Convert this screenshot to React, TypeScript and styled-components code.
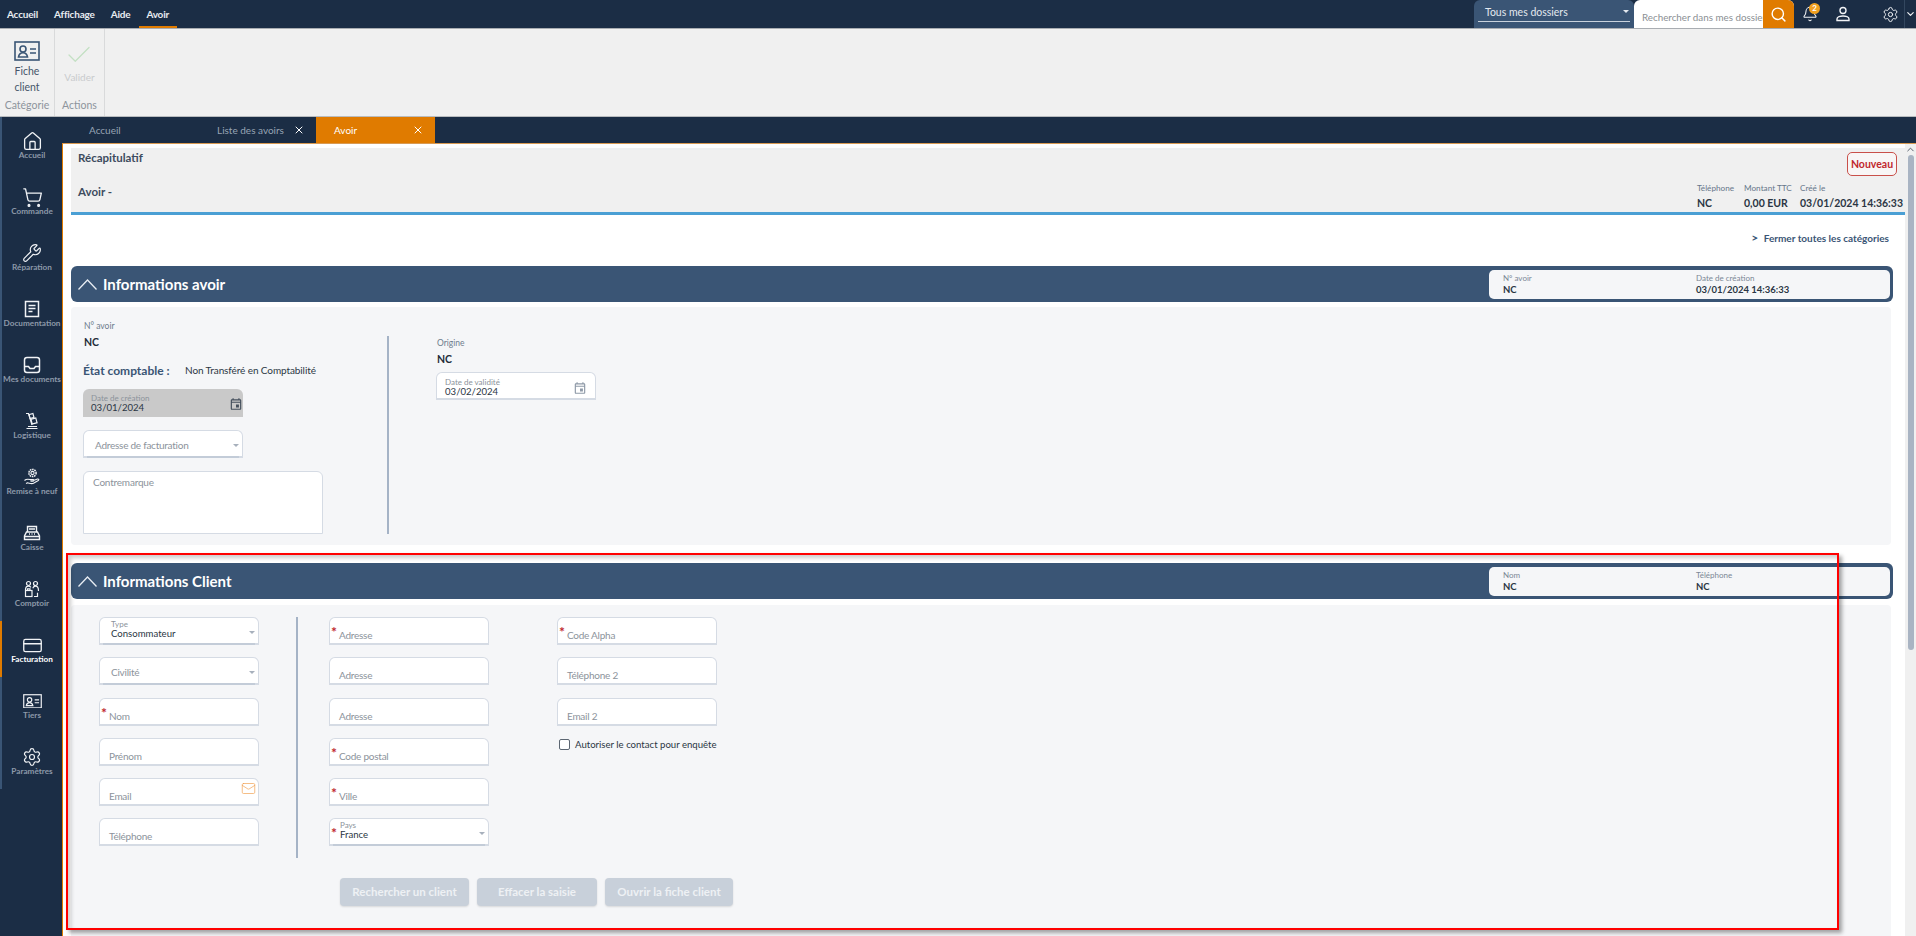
import React from "react";
import styled, { createGlobalStyle } from "styled-components";
import {
  Bell,
  Check,
  ChevronDown,
  ChevronUp,
  CreditCard,
  House,
  Mail,
  Search,
  Settings,
  ShoppingCart,
  Wrench,
  X,
} from "lucide-react";
import { MdOutlineEvent } from "react-icons/md";

const navy = "#1b2d45";
const slate = "#3a5575";
const orange = "#e07b00";

const GlobalStyle = createGlobalStyle`
  html, body {
    margin: 0;
    padding: 0;
    background: #fff;
  }
  * {
    box-sizing: border-box;
  }
  body {
    font-family: Lato, "Open Sans", sans-serif;
  }
`;

function IdCardIcon({ size = 22 }: { size?: number }) {
  return (
    <svg width={size} height={(size * 20) / 26} viewBox="0 0 26 20" fill="none" stroke="currentColor" strokeWidth="1.6">
      <rect x="1" y="1" width="24" height="18" />
      <circle cx="9" cy="8" r="3" />
      <path d="M4.5 16c.5-3 2.2-4.2 4.5-4.2s4 1.2 4.5 4.2z" />
      <path d="M16 8h6M16 12h6" />
    </svg>
  );
}

function PersonIcon() {
  return (
    <svg width="16" height="16" viewBox="0 0 16 16" fill="none" stroke="currentColor" strokeWidth="1.4">
      <circle cx="8" cy="4.500" r="3" />
      <path d="M2 14.500v-1.500c0-2 3.500-3 6-3s6 1 6 3v1.500z" />
    </svg>
  );
}

function DocIcon() {
  return (
    <svg width="18" height="18" viewBox="0 0 18 18" fill="none" stroke="currentColor" strokeWidth="1.5">
      <rect x="2.5" y="1.5" width="13" height="15" />
      <path d="M5.5 5.5h7M5.5 8.5h7M5.5 11.5h4" />
    </svg>
  );
}

function TrayIcon() {
  return (
    <svg width="18" height="18" viewBox="0 0 18 18" fill="none" stroke="currentColor" strokeWidth="1.5">
      <rect x="1.500" y="1.500" width="15" height="15" rx="2.500" />
      <path d="M1.500 10.500h4l1.500 2h4l1.500-2h4" />
    </svg>
  );
}

function TruckIcon() {
  return (
    <svg width="18" height="18" viewBox="0 0 18 18" fill="none" stroke="currentColor" strokeWidth="1.2">
      <path d="M3 1.5h2.500l3.500 11.500" />
      <rect x="6.5" y="2" width="4" height="4" transform="rotate(-15 8.5 4)" />
      <rect x="8.5" y="6.5" width="5" height="5" transform="rotate(-15 11 9)" />
      <path d="M3.5 16.500h11M5 14.500h9" />
    </svg>
  );
}

function RefurbishIcon() {
  return (
    <svg width="18" height="18" viewBox="0 0 18 18" fill="none" stroke="currentColor" strokeWidth="1.1">
      <circle cx="9.5" cy="5" r="1.600" />
      <circle cx="9.5" cy="5" r="3.600" strokeDasharray="1.6 .7" strokeWidth="1.5" />
      <path d="M1.500 12.500c2-1.800 3.600-1.600 5.600-.9h3c1 0 1 1.400 0 1.500H7.500M10.500 12.600l4-1.600c1.200-.3 1.800.8.800 1.500l-4.800 2.800c-2 .8-3.500 0-6-.5L3 15.500" />
    </svg>
  );
}

function RegisterIcon() {
  return (
    <svg width="18" height="18" viewBox="0 0 18 18" fill="none" stroke="currentColor" strokeWidth="1.4">
      <path d="M4.500 8V2.500h9V8" />
      <path d="M3.500 8h11l2 4v3.500h-15V12z" />
      <path d="M1.500 12.500h15M6 5h6M6 10h1M8.500 10h1M11 10h1" />
    </svg>
  );
}

function CounterIcon() {
  return (
    <svg width="18" height="18" viewBox="0 0 18 18" fill="none" stroke="currentColor" strokeWidth="1.2">
      <circle cx="5.500" cy="3.500" r="2" />
      <circle cx="12.500" cy="3.500" r="2" />
      <path d="M2.500 10c0-2.500 1.300-3.800 3-3.800 1 0 1.800.4 2.400 1.200M15.500 11c0-3-1.300-4.800-3-4.800-1.200 0-2.200.8-2.700 2" />
      <rect x="2.500" y="10.500" width="6.500" height="6" />
      <path d="M11 16.500h3.500v-3.800M4.500 10.500V8.800h2.500v1.700" />
    </svg>
  );
}

const navItems = [
  { label: "Accueil", icon: <House size={21} strokeWidth={1.5} /> },
  { label: "Commande", icon: <ShoppingCart size={21} strokeWidth={1.5} /> },
  { label: "Réparation", icon: <Wrench size={20} strokeWidth={1.4} /> },
  { label: "Documentation", icon: <DocIcon /> },
  { label: "Mes documents", icon: <TrayIcon /> },
  { label: "Logistique", icon: <TruckIcon /> },
  { label: "Remise à neuf", icon: <RefurbishIcon /> },
  { label: "Caisse", icon: <RegisterIcon /> },
  { label: "Comptoir", icon: <CounterIcon /> },
  { label: "Facturation", icon: <CreditCard size={21} strokeWidth={1.5} />, active: true },
  { label: "Tiers", icon: <IdCardIcon size={19} /> },
  { label: "Paramètres", icon: <Settings size={20} strokeWidth={1.4} /> },
];

type FieldDef = {
  label: string;
  required?: boolean;
  select?: boolean;
  value?: string;
  mail?: boolean;
};

const clientCol1: FieldDef[] = [
  { label: "Type", select: true, value: "Consommateur" },
  { label: "Civilité", select: true },
  { label: "Nom", required: true },
  { label: "Prénom" },
  { label: "Email", mail: true },
  { label: "Téléphone" },
];

const clientCol2: FieldDef[] = [
  { label: "Adresse", required: true },
  { label: "Adresse" },
  { label: "Adresse" },
  { label: "Code postal", required: true },
  { label: "Ville", required: true },
  { label: "Pays", required: true, select: true, value: "France" },
];

const clientCol3: FieldDef[] = [
  { label: "Code Alpha", required: true },
  { label: "Téléphone 2" },
  { label: "Email 2" },
];

function FormField({ field }: { field: FieldDef }) {
  return (
    <FieldBox $select={field.select}>
      {field.required && <Star>*</Star>}
      {field.value ? (
        <FilledText $starred={field.required}>
          <TinyLabel>{field.label}</TinyLabel>
          <FieldValue>{field.value}</FieldValue>
        </FilledText>
      ) : (
        <Placeholder $select={field.select}>{field.label}</Placeholder>
      )}
      {field.select && <Caret />}
      {field.mail && (
        <MailSlot>
          <Mail size={15} strokeWidth={1.1} />
        </MailSlot>
      )}
    </FieldBox>
  );
}

function DateField({ label, value, disabled }: { label: string; value: string; disabled?: boolean }) {
  return (
    <DateBox $disabled={disabled}>
      <div>
        <TinyLabel>{label}</TinyLabel>
        <FieldValue>{value}</FieldValue>
      </div>
      <DateIcon $disabled={disabled}>
        <MdOutlineEvent size={14} />
      </DateIcon>
    </DateBox>
  );
}

function SectionHeader({ title, cols }: { title: string; cols: { label: string; value: string }[] }) {
  return (
    <HeaderBar>
      <svg width="19" height="11" viewBox="0 0 19 11" fill="none" stroke="#e8edf3" strokeWidth="1.3">
        <path d="M.5 10.500L9.500 1L18.500 10.500" />
      </svg>
      <HeaderTitle>{title}</HeaderTitle>
      <HeaderSummary>
        {cols.map((c) => (
          <HeaderCol key={c.label}>
            <HeaderLabel>{c.label}</HeaderLabel>
            <HeaderValue>{c.value}</HeaderValue>
          </HeaderCol>
        ))}
      </HeaderSummary>
    </HeaderBar>
  );
}

export default function App() {
  return (
    <Page>
      <GlobalStyle />
      <TopBar>
        <Menu>
          <MenuItem>Accueil</MenuItem>
          <MenuItem>Affichage</MenuItem>
          <MenuItem>Aide</MenuItem>
          <MenuItem $active>Avoir</MenuItem>
        </Menu>
        <TopRight>
          <FolderSelect>
            <FolderInner>
              Tous mes dossiers
              <TopCaret />
            </FolderInner>
          </FolderSelect>
          <SearchBox>
            <SearchText>Rechercher dans mes dossier</SearchText>
            <SearchButton>
              <Search size={17} strokeWidth={2} />
            </SearchButton>
          </SearchBox>
          <TopIcon $w={32}>
            <Bell size={16} strokeWidth={1.6} />
            <Badge>2</Badge>
          </TopIcon>
          <TopIcon $w={34}>
            <PersonIcon />
          </TopIcon>
          <TopIcon $w={44} $pad={16}>
            <Settings size={17} strokeWidth={1.4} />
          </TopIcon>
          <ExpandButton>
            <ChevronDown size={12} strokeWidth={2.5} />
          </ExpandButton>
        </TopRight>
      </TopBar>

      <Ribbon>
        <RibbonGroup $w={55}>
          <RibbonBody>
            <FicheIcon>
              <IdCardIcon size={26} />
            </FicheIcon>
            <RibbonText>
              Fiche
              <br />
              client
            </RibbonText>
          </RibbonBody>
          <RibbonCaption>Catégorie</RibbonCaption>
        </RibbonGroup>
        <RibbonGroup $w={50}>
          <RibbonBody>
            <ValidIcon>
              <Check size={30} strokeWidth={1} />
            </ValidIcon>
            <RibbonDisabled>Valider</RibbonDisabled>
          </RibbonBody>
          <RibbonCaption>Actions</RibbonCaption>
        </RibbonGroup>
      </Ribbon>

      <Workspace>
        <SideNav>
          {navItems.map((item) => (
            <NavItem key={item.label} $active={item.active}>
              <NavIcon>{item.icon}</NavIcon>
              <NavLabel>{item.label}</NavLabel>
            </NavItem>
          ))}
        </SideNav>

        <MainColumn>
          <TabBar>
            <Tab $w={128}>Accueil</Tab>
            <Tab $w={126}>
              Liste des avoirs
              <X size={12} strokeWidth={2} color="#fff" />
            </Tab>
            <Tab $w={119} $active>
              Avoir
              <X size={12} strokeWidth={2} color="#fff" />
            </Tab>
          </TabBar>

          <ContentFrame>
            <ScrollArea>
              <Summary>
                <SummaryTop>
                  <SummaryTitle>Récapitulatif</SummaryTitle>
                  <NewBadge>Nouveau</NewBadge>
                </SummaryTop>
                <SummaryBottom>
                  <SummaryTitle>Avoir -</SummaryTitle>
                  <SummaryFacts>
                    <SummaryFact $w={47}>
                      <FactLabel>Téléphone</FactLabel>
                      <FactValue>NC</FactValue>
                    </SummaryFact>
                    <SummaryFact $w={56}>
                      <FactLabel>Montant TTC</FactLabel>
                      <FactValue>0,00 EUR</FactValue>
                    </SummaryFact>
                    <SummaryFact $w={87}>
                      <FactLabel>Créé le</FactLabel>
                      <FactValue>03/01/2024 14:36:33</FactValue>
                    </SummaryFact>
                  </SummaryFacts>
                </SummaryBottom>
              </Summary>

              <CloseAll>
                <span>&gt;</span> Fermer toutes les catégories
              </CloseAll>

              <SectionHeader
                title="Informations avoir"
                cols={[
                  { label: "N° avoir", value: "NC" },
                  { label: "Date de création", value: "03/01/2024 14:36:33" },
                ]}
              />
              <AvoirPanel>
                <AvoirLeft>
                  <ReadOnly>
                    <ReadLabel>N° avoir</ReadLabel>
                    <ReadValue>NC</ReadValue>
                  </ReadOnly>
                  <StateRow>
                    <StateLabel>État comptable :</StateLabel>
                    <StateValue>Non Transféré en Comptabilité</StateValue>
                  </StateRow>
                  <DateField label="Date de création" value="03/01/2024" disabled />
                  <AddressSelect>
                    <FieldBox $select>
                      <Placeholder $select>Adresse de facturation</Placeholder>
                      <Caret />
                    </FieldBox>
                  </AddressSelect>
                  <NoteBox>Contremarque</NoteBox>
                </AvoirLeft>
                <AvoirDivider />
                <AvoirRight>
                  <ReadOnly>
                    <ReadLabel>Origine</ReadLabel>
                    <ReadValue>NC</ReadValue>
                  </ReadOnly>
                  <DateField label="Date de validité" value="03/02/2024" />
                </AvoirRight>
              </AvoirPanel>

              <ClientHeader>
                <SectionHeader
                  title="Informations Client"
                  cols={[
                    { label: "Nom", value: "NC" },
                    { label: "Téléphone", value: "NC" },
                  ]}
                />
              </ClientHeader>
              <ClientPanel>
                <ClientColumns>
                  <FieldColumn>
                    {clientCol1.map((f) => (
                      <FormField key={f.label} field={f} />
                    ))}
                  </FieldColumn>
                  <ClientDivider />
                  <FieldColumn>
                    {clientCol2.map((f, i) => (
                      <FormField key={f.label + i} field={f} />
                    ))}
                  </FieldColumn>
                  <ThirdColumn>
                    {clientCol3.map((f) => (
                      <FormField key={f.label} field={f} />
                    ))}
                    <ConsentRow>
                      <ConsentBox />
                      Autoriser le contact pour enquête
                    </ConsentRow>
                  </ThirdColumn>
                </ClientColumns>
                <ButtonRow>
                  <GhostButton $w={129}>Rechercher un client</GhostButton>
                  <GhostButton $w={120}>Effacer la saisie</GhostButton>
                  <GhostButton $w={128}>Ouvrir la fiche client</GhostButton>
                </ButtonRow>
              </ClientPanel>
            </ScrollArea>
            <ScrollBar>
              <ChevronUp size={11} strokeWidth={2} color="#4b5563" />
              <ScrollThumb />
            </ScrollBar>
          </ContentFrame>
        </MainColumn>
      </Workspace>

      <Highlight />
    </Page>
  );
}

const Page = styled.div`
  position: relative;
  width: 1916px;
  height: 936px;
  overflow: hidden;
  background: #fff;
  display: flex;
  flex-direction: column;
`;

const TopBar = styled.header`
  height: 29px;
  flex: none;
  background: ${navy};
  border-bottom: 1px solid #a9adb2;
  display: flex;
  justify-content: space-between;
`;
const Menu = styled.nav`
  display: flex;
  padding-left: 7px;
  gap: 16px;
`;
const MenuItem = styled.div<{ $active?: boolean }>`
  position: relative;
  height: 28px;
  line-height: 28px;
  font-size: 10px;
  letter-spacing: -0.2px;
  font-weight: 700;
  color: #e8ecf1;
  ${({ $active }) =>
    $active &&
    `
    &::after {
      content: "";
      position: absolute;
      left: -7px;
      right: -8px;
      bottom: 0;
      height: 2px;
      background: ${orange};
    }
  `}
`;
const TopRight = styled.div`
  display: flex;
  align-items: stretch;
`;
const FolderSelect = styled.div`
  width: 160px;
  background: ${slate};
  border-radius: 6px 6px 0 0;
  padding: 0 4px;
`;
const FolderInner = styled.div`
  position: relative;
  height: 22px;
  padding: 5px 7px 0;
  font-size: 10.500px;
  line-height: 14px;
  color: #e4e9ef;
  border-bottom: 1px solid #c9d2dc;
`;
const TopCaret = styled.span`
  position: absolute;
  right: 1px;
  top: 10px;
  border-left: 3px solid transparent;
  border-right: 3px solid transparent;
  border-top: 3px solid #e4e9ef;
`;
const SearchBox = styled.div`
  width: 160px;
  display: flex;
  background: #fff;
  border-radius: 6px 6px 0 0;
  overflow: hidden;
`;
const SearchText = styled.div`
  flex: 1;
  min-width: 0;
  padding: 10px 0 0 8px;
  font-size: 9.800px;
  line-height: 14px;
  color: #8b8f94;
  white-space: nowrap;
`;
const SearchButton = styled.div`
  width: 31px;
  flex: none;
  background: ${orange};
  color: #fff;
  display: flex;
  align-items: center;
  justify-content: center;
`;
const TopIcon = styled.div<{ $w: number; $pad?: number }>`
  position: relative;
  width: ${({ $w }) => $w}px;
  padding-left: ${({ $pad }) => $pad || 0}px;
  flex: none;
  display: flex;
  align-items: center;
  justify-content: center;
  color: #f1f3f6;
`;
const Badge = styled.span`
  position: absolute;
  left: 15px;
  top: 3px;
  width: 11px;
  height: 11px;
  border-radius: 50%;
  background: #f0a020;
  color: #fff;
  font-size: 8px;
  font-weight: 700;
  line-height: 11px;
  text-align: center;
`;
const ExpandButton = styled.div`
  width: 12px;
  flex: none;
  border-left: 1px solid #33475f;
  display: flex;
  align-items: center;
  justify-content: center;
  color: #f1f3f6;
`;

const Ribbon = styled.section`
  height: 88px;
  flex: none;
  background: #f0f0f0;
  border-bottom: 1px solid #b9bcbf;
  display: flex;
`;
const RibbonGroup = styled.div<{ $w: number }>`
  width: ${({ $w }) => $w}px;
  border-right: 1px solid #d9dadb;
  display: flex;
  flex-direction: column;
  align-items: center;
`;
const RibbonBody = styled.div`
  flex: 1;
  display: flex;
  flex-direction: column;
  align-items: center;
`;
const FicheIcon = styled.div`
  margin-top: 12px;
  height: 20px;
  color: ${slate};
`;
const RibbonText = styled.div`
  margin-top: 3px;
  font-size: 10.500px;
  line-height: 15.500px;
  text-align: center;
  color: #47566a;
`;
const ValidIcon = styled.div`
  margin-top: 11px;
  height: 27px;
  color: #c4e0c4;
`;
const RibbonDisabled = styled.div`
  margin-top: 3px;
  font-size: 10px;
  line-height: 14px;
  color: #c9cbcd;
`;
const RibbonCaption = styled.div`
  height: 18px;
  font-size: 10.500px;
  line-height: 14px;
  color: #8d949c;
`;

const Workspace = styled.div`
  flex: 1;
  min-height: 0;
  display: flex;
  background: ${navy};
`;
const SideNav = styled.nav`
  width: 62px;
  height: 672px;
  flex: none;
  border-left: 2px solid ${slate};
`;
const NavItem = styled.div<{ $active?: boolean }>`
  height: 56px;
  margin-left: -2px;
  padding-top: 15px;
  border-left: 2px solid ${({ $active }) => ($active ? orange : "transparent")};
  display: flex;
  flex-direction: column;
  align-items: center;
  color: ${({ $active }) => ($active ? "#fff" : "#8d99a9")};
  font-weight: 700;
`;
const NavIcon = styled.div`
  height: 18px;
  display: flex;
  align-items: center;
  justify-content: center;
  color: #f1f3f6;
`;
const NavLabel = styled.div`
  font-size: 8.200px;
  line-height: 10px;
  white-space: nowrap;
`;

const MainColumn = styled.div`
  flex: 1;
  min-width: 0;
  display: flex;
  flex-direction: column;
`;
const TabBar = styled.div`
  height: 26px;
  flex: none;
  display: flex;
`;
const Tab = styled.div<{ $w: number; $active?: boolean }>`
  width: ${({ $w }) => $w}px;
  padding: 0 11px 0 ${({ $active }) => ($active ? 18 : 27)}px;
  display: flex;
  align-items: center;
  justify-content: space-between;
  font-size: 10px;
  color: ${({ $active }) => ($active ? "#fff" : "#97a4b4")};
  background: ${({ $active }) => ($active ? orange : "transparent")};
`;
const ContentFrame = styled.div`
  flex: 1;
  min-height: 0;
  background: #fff;
  border-top: 1px solid #d99a52;
  border-left: 1px solid ${orange};
  display: flex;
`;
const ScrollArea = styled.div`
  flex: 1;
  min-width: 0;
  overflow: hidden;
  padding: 4px 0 0 8px;
`;
const ScrollBar = styled.div`
  width: 11px;
  flex: none;
  background: #f0f0f0;
  display: flex;
  flex-direction: column;
  align-items: center;
`;
const ScrollThumb = styled.div`
  width: 6px;
  height: 495px;
  border-radius: 3px;
  background: #a9b4c3;
`;

const Summary = styled.section`
  height: 67px;
  background: #f0f0f0;
  border-bottom: 3px solid #4a9fd4;
  padding: 3px 18px 0 7px;
`;
const SummaryTop = styled.div`
  margin-right: -10px;
  display: flex;
  justify-content: space-between;
  align-items: flex-start;
  height: 34px;
`;
const SummaryTitle = styled.div`
  font-size: 11.500px;
  line-height: 14px;
  font-weight: 700;
  color: #3d4b5e;
`;
const NewBadge = styled.div`
  width: 50px;
  height: 24px;
  margin-top: 1px;
  border: 1px solid #c9504a;
  border-radius: 5px;
  background: #f8f6f6;
  color: #c0272d;
  font-size: 10.500px;
  font-weight: 700;
  line-height: 22px;
  text-align: center;
`;
const SummaryBottom = styled.div`
  display: flex;
  justify-content: space-between;
  align-items: flex-start;
`;
const SummaryFacts = styled.div`
  display: flex;
  margin-top: -2px;
`;
const SummaryFact = styled.div<{ $w: number }>`
  width: ${({ $w }) => $w}px;
  display: flex;
  flex-direction: column;
  gap: 5px;
  white-space: nowrap;
`;
const FactLabel = styled.div`
  font-size: 8.200px;
  line-height: 10px;
  color: #66768a;
`;
const FactValue = styled.div`
  font-size: 10.500px;
  line-height: 11px;
  font-weight: 700;
  color: #2b3644;
`;
const CloseAll = styled.div`
  height: 51px;
  padding: 16px 16px 0 0;
  text-align: right;
  font-size: 10px;
  line-height: 14px;
  font-weight: 700;
  color: ${slate};
  span {
    margin-right: 3px;
    font-size: 12px;
  }
`;

const HeaderBar = styled.div`
  width: 1822px;
  height: 36px;
  padding: 0 3px 0 7px;
  background: ${slate};
  border-radius: 6px;
  display: flex;
  align-items: center;
`;
const HeaderTitle = styled.div`
  margin-left: 6px;
  font-size: 15px;
  font-weight: 700;
  color: #fff;
`;
const HeaderSummary = styled.div`
  margin-left: auto;
  width: 401px;
  height: 29px;
  padding-left: 14px;
  border-radius: 5px;
  background: #f5f6f8;
  display: flex;
`;
const HeaderCol = styled.div`
  width: 193px;
  padding-top: 3px;
`;
const HeaderLabel = styled.div`
  font-size: 8px;
  line-height: 10px;
  color: #7b8795;
`;
const HeaderValue = styled.div`
  margin-top: 1px;
  font-size: 9.500px;
  line-height: 12px;
  font-weight: 700;
  color: #2b3644;
`;

const AvoirPanel = styled.section`
  width: 1820px;
  height: 238px;
  margin-top: 5px;
  padding: 14px 0 0 12px;
  background: #f5f6f8;
  border-radius: 4px;
  display: flex;
  align-items: flex-start;
`;
const AvoirLeft = styled.div`
  width: 304px;
  flex: none;
`;
const AvoirDivider = styled.div`
  width: 2px;
  height: 198px;
  margin-top: 15px;
  background: #a5b3c6;
  flex: none;
`;
const AvoirRight = styled.div`
  width: 160px;
  flex: none;
  margin: 17px 0 0 47px;
`;
const ReadOnly = styled.div`
  margin-left: 1px;
  margin-bottom: 6px;
`;
const ReadLabel = styled.div`
  font-size: 8.500px;
  line-height: 10px;
  color: #6e7c8d;
`;
const ReadValue = styled.div`
  margin-top: 4px;
  font-size: 10.500px;
  line-height: 14px;
  font-weight: 700;
  color: #232c38;
`;
const StateRow = styled.div`
  height: 26px;
  margin-top: 14px;
  display: flex;
`;
const StateLabel = styled.div`
  width: 102px;
  font-size: 12px;
  line-height: 16px;
  font-weight: 700;
  color: ${slate};
`;
const StateValue = styled.div`
  font-size: 10px;
  letter-spacing: -0.1px;
  line-height: 14px;
  color: #2b3644;
`;
const DateBox = styled.div<{ $disabled?: boolean }>`
  width: 160px;
  height: 28px;
  padding: ${({ $disabled }) => ($disabled ? "1px 0 0 8px" : "4px 8px 0 8px")};
  border-radius: 6px 6px 0 0;
  background: ${({ $disabled }) => ($disabled ? "#c9c9c9" : "#fff")};
  border: ${({ $disabled }) => ($disabled ? "0" : "1px solid #d5dbe4")};
  border-bottom-width: 2px;
  display: flex;
  justify-content: space-between;
  align-items: center;
`;
const DateIcon = styled.div<{ $disabled?: boolean }>`
  display: flex;
  color: ${({ $disabled }) => ($disabled ? "#444f5c" : "#8f9aa8")};
`;
const TinyLabel = styled.div`
  font-size: 8px;
  line-height: 8px;
  color: #8c939b;
`;
const FieldValue = styled.div`
  font-size: 9.600px;
  line-height: 11px;
  color: #2b3644;
`;
const AddressSelect = styled.div`
  width: 160px;
  margin-top: 13px;
`;
const NoteBox = styled.div`
  width: 240px;
  height: 63px;
  margin-top: 13px;
  padding: 3px 9px;
  background: #fff;
  border: 1px solid #d5dbe4;
  border-radius: 6px 6px 0 0;
  font-size: 10px;
  letter-spacing: -0.2px;
  line-height: 14px;
  color: #8c939b;
`;

const ClientHeader = styled.div`
  margin-top: 18px;
`;
const ClientPanel = styled.section`
  width: 1820px;
  height: 340px;
  margin-top: 6px;
  padding: 12px 0 0 28px;
  background: #f5f6f8;
  border-radius: 4px;
`;
const ClientColumns = styled.div`
  display: flex;
  align-items: stretch;
`;
const FieldColumn = styled.div`
  width: 160px;
  padding-bottom: 12px;
  display: flex;
  flex-direction: column;
  gap: 12.300px;
`;
const ThirdColumn = styled(FieldColumn)`
  margin-left: 68px;
`;
const ClientDivider = styled.div`
  width: 2px;
  margin: 0 31px 0 37px;
  background: #a5b3c6;
`;
const FieldBox = styled.div<{ $select?: boolean }>`
  position: relative;
  height: 28px;
  background: #fff;
  border: 1px solid #d5dbe4;
  border-bottom-width: 2px;
  border-radius: 6px 6px 0 0;
  ${({ $select }) =>
    $select &&
    `
    &::after {
      content: "";
      position: absolute;
      left: 3px;
      right: 3px;
      bottom: -2px;
      height: 2px;
      background: #c3ccd8;
    }
  `}
`;
const Placeholder = styled.div<{ $select?: boolean }>`
  position: absolute;
  left: ${({ $select }) => ($select ? 11 : 9)}px;
  top: ${({ $select }) => ($select ? 7 : 10)}px;
  font-size: 10px;
  letter-spacing: -0.25px;
  line-height: 14px;
  color: #8c939b;
`;
const FilledText = styled.div<{ $starred?: boolean }>`
  position: absolute;
  left: ${({ $starred }) => ($starred ? 10 : 11)}px;
  top: 2px;
`;
const Star = styled.span`
  position: absolute;
  left: 1px;
  top: 7px;
  font-size: 14px;
  line-height: 14px;
  font-weight: 700;
  color: #c0272d;
`;
const Caret = styled.span`
  position: absolute;
  right: 3px;
  top: 13px;
  border-left: 3px solid transparent;
  border-right: 3px solid transparent;
  border-top: 3px solid #a7b0bc;
`;
const MailSlot = styled.span`
  position: absolute;
  right: 2px;
  top: 2px;
  display: flex;
  color: #f0a050;
`;
const ConsentRow = styled.div`
  height: 14px;
  margin: 0 0 0 2px;
  display: flex;
  align-items: center;
  white-space: nowrap;
  font-size: 9.600px;
  color: #2b3644;
`;
const ConsentBox = styled.span`
  width: 11px;
  height: 11px;
  flex: none;
  margin-right: 5px;
  border: 1px solid #5c6672;
  border-radius: 2px;
  background: #fff;
`;
const ButtonRow = styled.div`
  margin: 20px 0 0 241px;
  display: flex;
  gap: 8px;
`;
const GhostButton = styled.div<{ $w: number }>`
  width: ${({ $w }) => $w}px;
  height: 28px;
  border-radius: 4px;
  background: #c8d0da;
  box-shadow: 0 1px 2px rgba(0, 0, 0, 0.12);
  color: #eef1f4;
  font-size: 11.500px;
  font-weight: 700;
  line-height: 28px;
  text-align: center;
`;

const Highlight = styled.div`
  position: absolute;
  left: 66px;
  top: 553px;
  width: 1773px;
  height: 377px;
  border: 2px solid #f00;
  box-shadow: 3px 3px 4px rgba(0, 0, 0, 0.35), inset 3px 3px 4px rgba(0, 0, 0, 0.2);
  pointer-events: none;
`;
